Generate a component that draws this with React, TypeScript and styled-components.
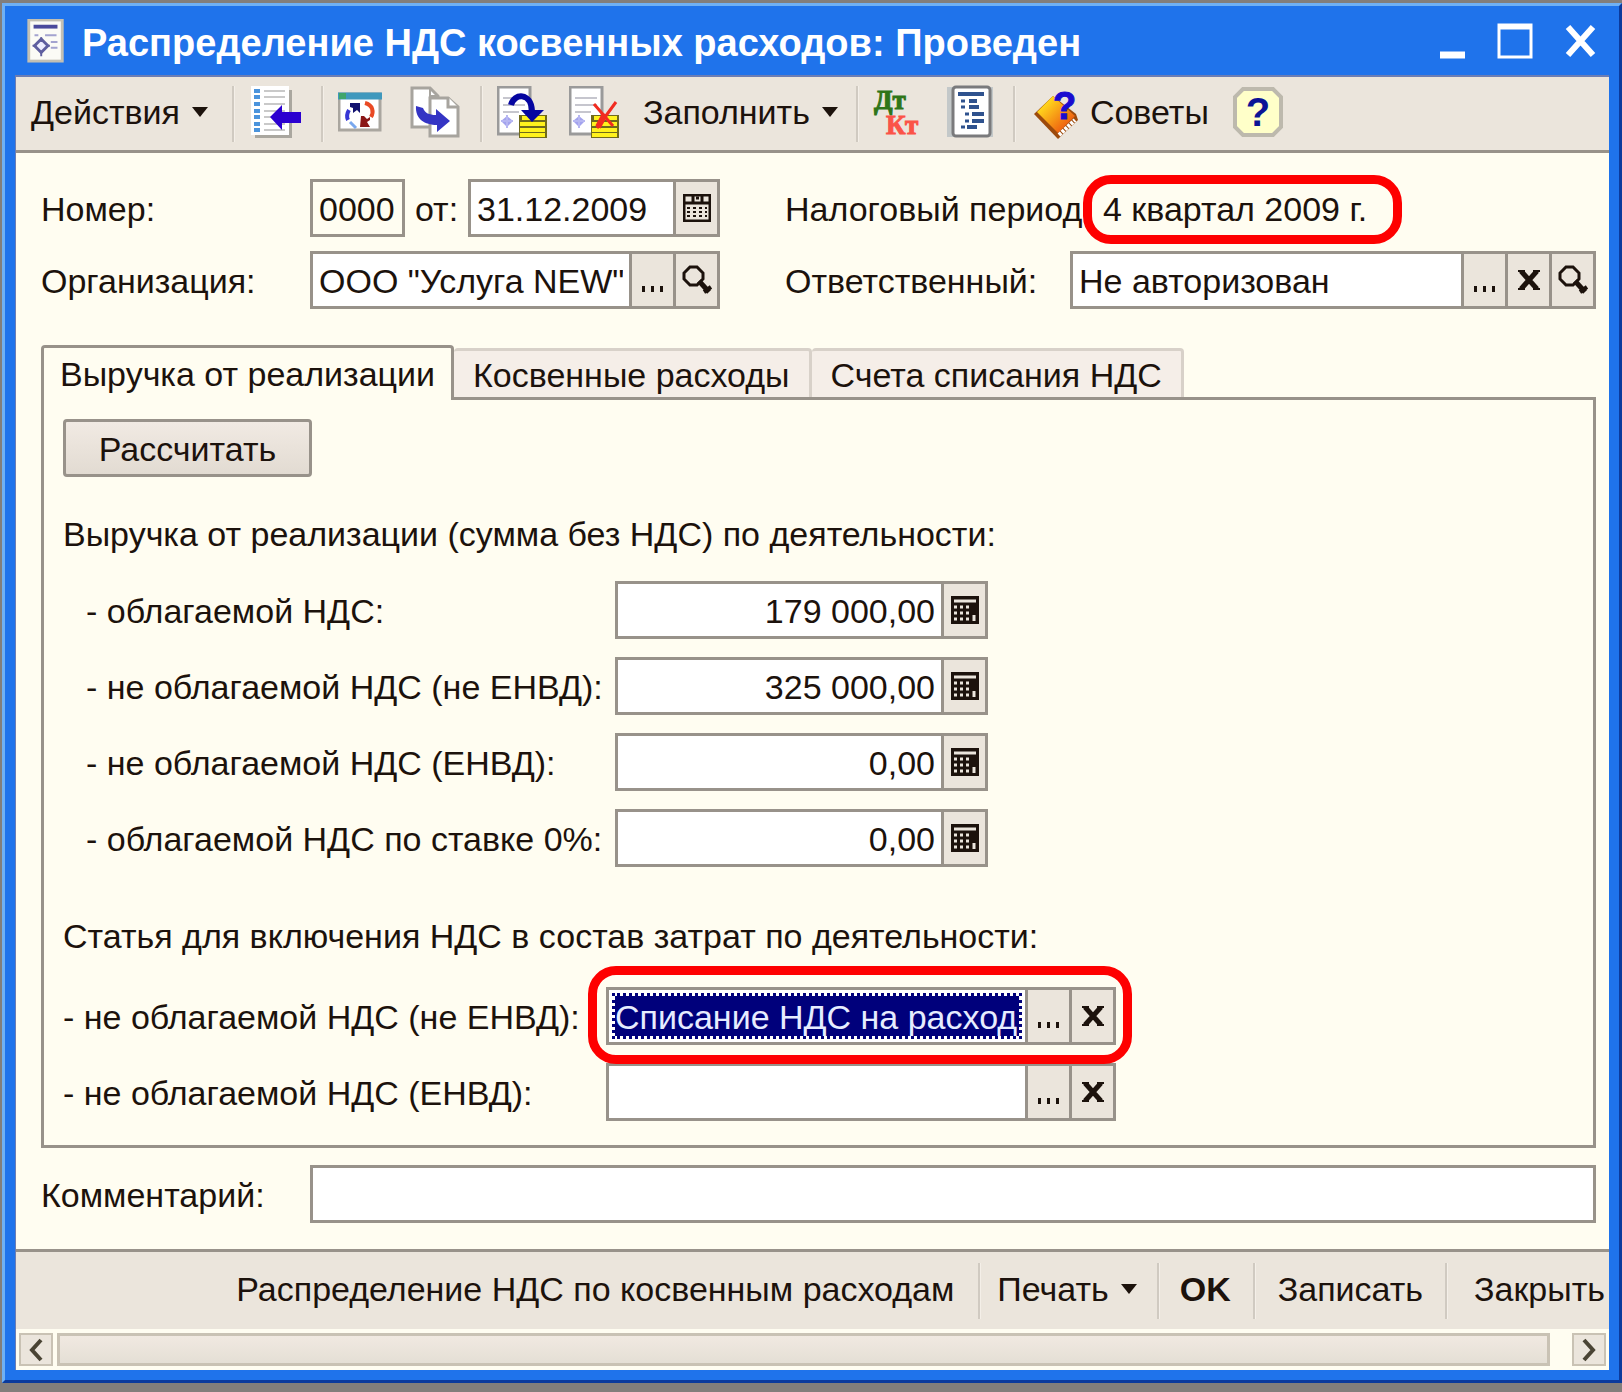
import React, { useState } from "react";
import styled, { createGlobalStyle, css } from "styled-components";

const font = `"Liberation Sans", Arial, sans-serif`;
const line = "#98928a";
const face = "#ebe5dc";
const paper = "#fffdf1";
const ink = "#1c120c";

const GlobalStyle = createGlobalStyle`
  * { box-sizing: border-box; }
  body { margin: 0; background: #827e7b; }
  button, input { font: inherit; color: inherit; margin: 0; border-radius: 0; }
`;

const Frame = styled.main`
  margin: 3px 0 9px 2px;
  border: 3px solid #6fb0f4;
  border-right-color: #0b3a9c;
  border-bottom-color: #0b3a9c;
  background: #1f73eb;
  padding: 0 10px 10px;
  font-family: ${font};
  font-size: 34px;
  line-height: 44px;
  color: ${ink};
`;

const TitleBar = styled.header`
  display: flex;
  align-items: center;
  height: 69px;
  padding: 0 12px;
  color: #fff;
`;

const Title = styled.h1`
  flex: 1;
  margin: 0 0 0 17px;
  padding-top: 4px;
  font-size: 38px;
  font-weight: 700;
  white-space: nowrap;
`;

const WindowButtons = styled.div`
  display: flex;
  gap: 32px;
`;

const WindowButton = styled.button`
  display: flex;
  padding: 0;
  border: 0;
  background: none;
  color: #fff;
`;

const Client = styled.div`
  border-top: 2px solid #6b7db4;
  border-left: 1px solid #6b7db4;
  background: ${paper};
`;

const ToolBar = styled.div`
  display: flex;
  align-items: center;
  height: 76px;
  overflow: hidden;
  background: ${face};
  border-bottom: 3px solid ${line};
`;

const ToolButton = styled.button<{ $left?: number; $bold?: boolean }>`
  display: flex;
  align-items: center;
  gap: 12px;
  padding: 0 0 3px;
  margin-left: ${(p) => p.$left ?? 16}px;
  border: 0;
  background: none;
  white-space: nowrap;
  font-weight: ${(p) => (p.$bold ? 700 : 400)};
`;

const Separator = styled.span<{ $left?: number }>`
  flex: none;
  width: 3px;
  height: 56px;
  margin-left: ${(p) => p.$left ?? 20}px;
  background: #d0cac1;
  border-right: 1px solid #f4efe8;
`;

const Body = styled.form`
  padding: 26px 13px 26px 25px;
`;

const Head = styled.div`
  display: grid;
  grid-template-columns: 269px 410px 350px minmax(0, 1fr);
  row-gap: 14px;
  align-items: center;
  & > :nth-child(4n + 3) { margin-left: 65px; }
`;

const Label = styled.label`
  padding-top: 2px;
  white-space: nowrap;
`;

const Group = styled.div`
  display: flex;
  align-items: center;
  justify-content: space-between;
`;

const Field = styled.div<{ $width?: number }>`
  display: flex;
  position: relative;
  width: ${(p) => (p.$width ? `${p.$width}px` : "100%")};
  height: 58px;
  border: 3px solid ${line};
  background: #fff;
`;

const Entry = styled.input<{ $right?: boolean; $tinted?: boolean; $selected?: boolean }>`
  flex: 1;
  min-width: 0;
  width: 100%;
  padding: 2px 6px 0;
  border: 0;
  outline: 0;
  background: ${(p) => (p.$tinted ? paper : "#fff")};
  text-align: ${(p) => (p.$right ? "right" : "left")};
  ${(p) =>
    p.$selected &&
    css`
      margin: 3px;
      padding: 2px 0 0;
      border: 3px dotted #00007b;
      background: #00007b;
      background-clip: padding-box;
      color: #e6ecff;
    `}
`;

const FieldButton = styled.button`
  display: flex;
  flex: none;
  align-items: center;
  justify-content: center;
  width: 44px;
  padding: 0;
  border: 0;
  border-left: 3px solid ${line};
  background: ${face};
`;

const Ring = styled.span`
  position: absolute;
  border: 9px solid #fe0000;
  border-radius: 28px;
  pointer-events: none;
`;

const Period = styled.output`
  position: relative;
  justify-self: start;
  padding-top: 2px;
  padding-left: 33px;
  white-space: nowrap;
  ${Ring} { inset: -10px -35px -13px 13px; }
`;

const FieldRing = styled(Ring)`
  inset: -24px -19px -22px -21px;
  z-index: 1;
`;

const Tabs = styled.div`
  display: flex;
  align-items: flex-end;
  margin-top: 36px;
`;

const Tab = styled.button<{ $active: boolean }>`
  height: ${(p) => (p.$active ? 55 : 49)}px;
  margin-bottom: ${(p) => (p.$active ? -3 : 0)}px;
  padding: ${(p) => (p.$active ? 0 : 2)}px ${(p) => (p.$active ? 16 : 19)}px 0;
  position: relative;
  z-index: ${(p) => (p.$active ? 1 : 0)};
  border: 3px solid ${(p) => (p.$active ? line : "#d8d1c9")};
  border-bottom: 0;
  border-left-width: ${(p) => (p.$active ? 3 : 0)}px;
  border-radius: 4px 4px 0 0;
  background: ${(p) => (p.$active ? paper : "#f5eee8")};
  white-space: nowrap;
`;

const Panel = styled.section`
  padding: 19px 19px 24px;
  border: 3px solid ${line};
`;

const Calculate = styled.button`
  display: block;
  width: 249px;
  height: 58px;
  padding: 2px 0 0;
  border: 3px solid ${line};
  border-radius: 4px;
  background: linear-gradient(#f1eae3, #e2dbd2);
`;

const Heading = styled.h2<{ $top: number }>`
  margin: ${(p) => p.$top}px 0 0;
  font-size: inherit;
  font-weight: 400;
  white-space: nowrap;
`;

const Rows = styled.div<{ $label: number; $top: number }>`
  display: grid;
  grid-template-columns: ${(p) => p.$label}px minmax(0, 1fr);
  align-items: center;
  row-gap: 18px;
  margin-top: ${(p) => p.$top}px;
`;

const Comment = styled.div`
  display: grid;
  grid-template-columns: 269px minmax(0, 1fr);
  align-items: center;
  margin-top: 17px;
`;

const Footer = styled(ToolBar)`
  justify-content: flex-end;
  height: 80px;
  padding-right: 4px;
  border-top: 3px solid ${line};
  border-bottom: 0;
`;

const ScrollBar = styled.div`
  display: flex;
  gap: 4px;
  padding: 4px 3px;
  height: 41px;
`;

const ScrollButton = styled.button`
  display: flex;
  align-items: center;
  justify-content: center;
  width: 34px;
  padding: 0;
  border: 2px solid #c9c2b4;
  background: ${face};
`;

const Track = styled.div`
  flex: 1;
  padding-right: 18px;
`;

const Thumb = styled.div`
  height: 100%;
  border: 3px solid #c9c2b4;
  background: linear-gradient(#f1e9e1, #e4dfd5);
`;

const DocumentIcon = () => (
  <svg width="38" height="44" viewBox="0 0 38 46">
    <rect x="1" y="1" width="35" height="43" fill="#fbfbf6" stroke="#c3c0b4" strokeWidth="3" />
    <path d="M6 8h25" stroke="#4a4a9c" strokeWidth="4" />
    <path d="M7 17h4M18 17h12M24 24h7M24 30h7" stroke="#a3a3cf" strokeWidth="2" />
    <path d="M14 21l7 7-7 7-7-7z" fill="#eef" stroke="#5f5f9f" strokeWidth="3" />
    <path d="M14 19v5M14 33v6M5 28h4M19 28h4" stroke="#5f5f9f" strokeWidth="2" />
  </svg>
);

const ListArrowIcon = () => (
  <svg width="50" height="52" viewBox="0 0 50 52">
    <path d="M4 50h35V4" fill="none" stroke="#aaa79f" strokeWidth="4" />
    <rect x="0" y="0" width="38" height="49" fill="#fff" />
    {[5, 11, 18, 25, 31, 38, 44].map((y) => (
      <g key={y}>
        <path d={`M3 ${y}h6`} stroke="#4b94dc" strokeWidth="4" />
        <path d={`M13 ${y}h21`} stroke="#c9c9c9" strokeWidth="2" />
      </g>
    ))}
    <path d="M19 31l12-12v7h19v11H31v7z" fill="#2b00d0" />
  </svg>
);

const RefreshIcon = () => (
  <svg width="44" height="40" viewBox="0 0 44 40">
    <rect x="1" y="2" width="41" height="36" fill="#fff" stroke="#aaa69f" strokeWidth="3" />
    <path d="M0 4h44" stroke="#3f98bd" strokeWidth="7" />
    <path d="M1 4h7" stroke="#3fa56c" strokeWidth="6" />
    <path d="M12 11h10v10l-3-3-4 3v-5l-3-1z" fill="#11116f" />
    <path d="M11 18c-3 5-2 8-1 10" fill="none" stroke="#3636d5" strokeWidth="4" />
    <path d="M12 30l6 6" stroke="#79a8ee" strokeWidth="3" />
    <path d="M23 24h3l3 3 3-2v3l-3 2 3 5H22z" fill="#8b1717" />
    <path d="M27 11c8 2 9 9 6 14" fill="none" stroke="#e94a24" strokeWidth="4" />
  </svg>
);

const CopyIcon = () => (
  <svg width="50" height="52" viewBox="0 0 50 52">
    <path d="M2 2h18l8 8v31H2z" fill="#fff" stroke="#a7a49e" strokeWidth="3" />
    <path d="M20 1v9h9" fill="none" stroke="#a7a49e" strokeWidth="2" />
    <path d="M20 12h18l10 9v29H20z" fill="#fff" stroke="#a7a49e" strokeWidth="3" />
    <path d="M38 11v10h10" fill="#fff" stroke="#a7a49e" strokeWidth="3" />
    <path d="M6 20l7 2c2 5 6 7 13 7v-6l14 12-13 11v-7C15 39 5 33 6 20z" fill="#3434c4" />
  </svg>
);

const Stack = () => (
  <>
    <rect x="22" y="29" width="28" height="23" fill="#6f6a1d" />
    <path d="M25 32h23M23 38h25M23 44h25M23 49h25" stroke="#fff21d" strokeWidth="4" />
  </>
);

const Sheet = () => (
  <>
    <rect x="1" y="1" width="32" height="47" fill="#fff" stroke="#9a9a9a" strokeWidth="3" />
    <path d="M6 12h22M6 19h22M6 26h16" stroke="#c6c6ce" strokeWidth="2" />
    <path d="M10 30l6 5-6 6-6-6z" fill="#a3a3ee" />
    <path d="M10 29v13M4 35h12" stroke="#b6b6f2" strokeWidth="2" />
  </>
);

const PostIcon = () => (
  <svg width="50" height="52" viewBox="0 0 50 52">
    <Sheet />
    <Stack />
    <path d="M14 19C17 7 34 6 35 25" fill="none" stroke="#0505a0" strokeWidth="6" />
    <path d="M24 24h23L35 36z" fill="#0505a0" />
  </svg>
);

const UnpostIcon = () => (
  <svg width="50" height="52" viewBox="0 0 50 52">
    <Sheet />
    <Stack />
    <path d="M25 18l19 22M47 16L28 42" stroke="#f12c20" strokeWidth="3" />
    <path d="M36 28l-7 13" stroke="#f12c20" strokeWidth="6" />
  </svg>
);

const DebitCreditIcon = () => (
  <svg width="50" height="56" viewBox="0 0 50 56" fontFamily="Liberation Serif, serif" fontWeight="700" fontSize="27" strokeWidth="1">
    <text x="1" y="25" fill="#2f7518" stroke="#2f7518">Дт</text>
    <text x="13" y="50" fill="#fb5348" stroke="#fb5348">Кт</text>
  </svg>
);

const StructureIcon = () => (
  <svg width="46" height="54" viewBox="0 0 46 54">
    <rect x="0" y="2" width="46" height="50" fill="#c3c8c9" />
    <rect x="6" y="2" width="37" height="49" rx="3" fill="#fff" stroke="#7a7a7c" strokeWidth="3" />
    <path d="M11 9h26M22 16h8M22 22h10M25 29h12M25 36h12M20 42h10" stroke="#2f528e" strokeWidth="4" />
    <path d="M14 16h4M14 22h4M18 29h4M18 36h4M14 42h4" stroke="#2f528e" strokeWidth="3" />
  </svg>
);

const TipsIcon = () => (
  <svg width="44" height="54" viewBox="0 0 44 54">
    <defs>
      <linearGradient id="cover" x1="0" y1="0" x2="1" y2="1">
        <stop offset="20%" stopColor="#ffd91c" />
        <stop offset="80%" stopColor="#ef5f10" />
      </linearGradient>
    </defs>
    <path d="M19 11L0 29l24 25 20-19-2-6z" fill="#9c4a0c" />
    <path d="M19 11L3 27l21 21 17-17z" fill="url(#cover)" />
    <path d="M25 50l16-15" stroke="#fff" strokeWidth="4" strokeDasharray="3 1" />
    <text x="19" y="34" fontFamily="Liberation Sans, sans-serif" fontWeight="700" fontSize="38" fill="#1a0bd0" stroke="#1a0bd0">?</text>
  </svg>
);

const HelpIcon = () => (
  <svg width="50" height="50" viewBox="0 0 50 50">
    <path d="M10 2h30l8 8v30l-8 8H10l-8-8V10z" fill="#ffffc9" stroke="#bdb9ad" strokeWidth="4" />
    <text x="25" y="39" textAnchor="middle" fontFamily="Liberation Sans, sans-serif" fontWeight="700" fontSize="40" fill="#0b1396">?</text>
  </svg>
);

const Caret = () => (
  <svg width="16" height="10" viewBox="0 0 16 10"><path d="M0 0h16L8 10z" fill={ink} /></svg>
);

const CalendarIcon = () => (
  <svg width="28" height="28" viewBox="0 0 28 28">
    <rect x="1" y="1" width="26" height="26" fill="none" stroke={ink} strokeWidth="3" />
    <path d="M1 9h26M10 2v6M19 2v6M13 4h3" stroke={ink} strokeWidth="3" />
    <path d="M4 14h20M4 18h20M4 22h20" stroke={ink} strokeWidth="2" strokeDasharray="3 3" />
  </svg>
);

const CalculatorIcon = () => (
  <svg width="28" height="28" viewBox="0 0 28 28">
    <rect width="28" height="28" fill={ink} />
    <path d="M3 5h22" stroke={face} strokeWidth="3" />
    <path d="M3 11h16M3 17h16M3 23h16" stroke={face} strokeWidth="3" strokeDasharray="3 3" />
    <path d="M23 19v6" stroke={face} strokeWidth="3" />
  </svg>
);

const DotsIcon = () => (
  <svg width="24" height="28" viewBox="0 0 24 28">
    <path d="M1 20h3v6H1zM10 20h3v6h-3zM19 20h3v6h-3z" fill={ink} />
  </svg>
);

const ClearIcon = () => (
  <svg width="22" height="20" viewBox="0 0 22 20">
    <path d="M3 1l16 18M19 1L3 19" stroke={ink} strokeWidth="5" />
    <path d="M0 1h7M15 1h7M0 19h7M15 19h7" stroke={ink} strokeWidth="2" />
  </svg>
);

const SearchIcon = () => (
  <svg width="30" height="30" viewBox="0 0 30 30">
    <path d="M8 2h7l6 6v6l-6 6H8l-6-6V8z" fill="none" stroke={ink} strokeWidth="3" />
    <path d="M17 16l10 11" stroke={ink} strokeWidth="5" />
    <path d="M29 22l-7 5" stroke={ink} strokeWidth="4" />
  </svg>
);

const Chevron = ({ d }: { d: string }) => (
  <svg width="14" height="24" viewBox="0 0 14 24"><path d={d} fill="none" stroke="#4a4434" strokeWidth="4" /></svg>
);

const fieldIcons = {
  choose: { title: "Выбрать", Icon: DotsIcon },
  clear: { title: "Очистить", Icon: ClearIcon },
  open: { title: "Открыть", Icon: SearchIcon },
  calendar: { title: "Календарь", Icon: CalendarIcon },
  calculator: { title: "Калькулятор", Icon: CalculatorIcon },
};

type InputProps = {
  id: string;
  value?: string;
  width?: number;
  right?: boolean;
  tinted?: boolean;
  selected?: boolean;
  ringed?: boolean;
  buttons?: (keyof typeof fieldIcons)[];
};

const InputField = ({ id, value = "", width, right, tinted, selected, ringed, buttons = [] }: InputProps) => (
  <Field $width={width}>
    <Entry id={id} defaultValue={value} $right={right} $tinted={tinted} $selected={selected} />
    {buttons.map((name) => {
      const { title, Icon } = fieldIcons[name];
      return <FieldButton key={name} type="button" aria-label={title}><Icon /></FieldButton>;
    })}
    {ringed && <FieldRing />}
  </Field>
);

const tabs = ["Выручка от реализации", "Косвенные расходы", "Счета списания НДС"];

const revenue = [
  { id: "taxed", label: "- облагаемой НДС:", value: "179 000,00" },
  { id: "untaxed", label: "- не облагаемой НДС (не ЕНВД):", value: "325 000,00" },
  { id: "envd", label: "- не облагаемой НДС (ЕНВД):", value: "0,00" },
  { id: "zero", label: "- облагаемой НДС по ставке 0%:", value: "0,00" },
];

const IndentedLabel = styled(Label)`
  padding-left: 23px;
`;

export default function App() {
  const [active, setActive] = useState(0);
  return (
    <Frame>
      <GlobalStyle />
      <TitleBar>
        <DocumentIcon />
        <Title>Распределение НДС косвенных расходов: Проведен</Title>
        <WindowButtons>
          <WindowButton aria-label="Свернуть">
            <svg width="28" height="36" viewBox="0 0 28 36"><path d="M3 32h25" stroke="#fff" strokeWidth="7" /></svg>
          </WindowButton>
          <WindowButton aria-label="Развернуть">
            <svg width="36" height="36" viewBox="0 0 36 36"><path d="M2 2h32v32H2zM2 5h32" fill="none" stroke="#fff" strokeWidth="3" /></svg>
          </WindowButton>
          <WindowButton aria-label="Закрыть окно">
            <svg width="32" height="36" viewBox="0 0 32 36"><path d="M3 4l25 28M28 4L3 32" stroke="#fff" strokeWidth="6" /></svg>
          </WindowButton>
        </WindowButtons>
      </TitleBar>
      <Client>
        <ToolBar>
          <ToolButton $left={15}>Действия<Caret /></ToolButton>
          <Separator $left={24} />
          <ToolButton aria-label="Показать в списке"><ListArrowIcon /></ToolButton>
          <Separator />
          <ToolButton $left={14} aria-label="Обновить"><RefreshIcon /></ToolButton>
          <ToolButton $left={28} aria-label="Скопировать"><CopyIcon /></ToolButton>
          <Separator />
          <ToolButton $left={14} aria-label="Провести"><PostIcon /></ToolButton>
          <ToolButton $left={22} aria-label="Отменить проведение"><UnpostIcon /></ToolButton>
          <ToolButton $left={24}>Заполнить<Caret /></ToolButton>
          <Separator $left={18} />
          <ToolButton $left={14} aria-label="Дебет и кредит"><DebitCreditIcon /></ToolButton>
          <ToolButton $left={24} aria-label="Структура"><StructureIcon /></ToolButton>
          <Separator />
          <ToolButton $left={18}><TipsIcon />Советы</ToolButton>
          <ToolButton $left={24} aria-label="Справка"><HelpIcon /></ToolButton>
        </ToolBar>
        <Body>
          <Head>
            <Label htmlFor="number">Номер:</Label>
            <Group>
              <InputField id="number" value="0000" width={95} tinted />
              <Label htmlFor="date">от:</Label>
              <InputField id="date" value="31.12.2009" width={252} buttons={["calendar"]} />
            </Group>
            <Label htmlFor="period">Налоговый период:</Label>
            <Period id="period">4 квартал 2009 г.<Ring /></Period>
            <Label htmlFor="company">Организация:</Label>
            <InputField id="company" value={'ООО "Услуга NEW"'} buttons={["choose", "open"]} />
            <Label htmlFor="person">Ответственный:</Label>
            <InputField id="person" value="Не авторизован" buttons={["choose", "clear", "open"]} />
          </Head>
          <Tabs role="tablist">
            {tabs.map((name, i) => (
              <Tab key={name} type="button" role="tab" aria-selected={i === active} $active={i === active} onClick={() => setActive(i)}>
                {name}
              </Tab>
            ))}
          </Tabs>
          <Panel>
            <Calculate type="button">Рассчитать</Calculate>
            <Heading $top={35}>Выручка от реализации (сумма без НДС) по деятельности:</Heading>
            <Rows $label={552} $top={25}>
              {revenue.map(({ id, label, value }) => (
                <React.Fragment key={id}>
                  <IndentedLabel htmlFor={id}>{label}</IndentedLabel>
                  <InputField id={id} value={value} width={373} right buttons={["calculator"]} />
                </React.Fragment>
              ))}
            </Rows>
            <Heading $top={47}>Статья для включения НДС в состав затрат по деятельности:</Heading>
            <Rows $label={543} $top={29}>
              <Label htmlFor="cost">- не облагаемой НДС (не ЕНВД):</Label>
              <InputField id="cost" value="Списание НДС на расход" width={510} selected ringed buttons={["choose", "clear"]} />
              <Label htmlFor="cost-envd">- не облагаемой НДС (ЕНВД):</Label>
              <InputField id="cost-envd" width={510} buttons={["choose", "clear"]} />
            </Rows>
          </Panel>
          <Comment>
            <Label htmlFor="comment">Комментарий:</Label>
            <InputField id="comment" />
          </Comment>
        </Body>
        <Footer>
          <ToolButton>Распределение НДС по косвенным расходам</ToolButton>
          <Separator $left={24} />
          <ToolButton>Печать<Caret /></ToolButton>
          <Separator />
          <ToolButton $left={20} $bold>OK</ToolButton>
          <Separator $left={22} />
          <ToolButton $left={22}>Записать</ToolButton>
          <Separator $left={22} />
          <ToolButton $left={26}>Закрыть</ToolButton>
        </Footer>
        <ScrollBar>
          <ScrollButton aria-label="Прокрутить влево"><Chevron d="M12 2L3 12l9 10" /></ScrollButton>
          <Track><Thumb /></Track>
          <ScrollButton aria-label="Прокрутить вправо"><Chevron d="M2 2l9 10-9 10" /></ScrollButton>
        </ScrollBar>
      </Client>
    </Frame>
  );
}
